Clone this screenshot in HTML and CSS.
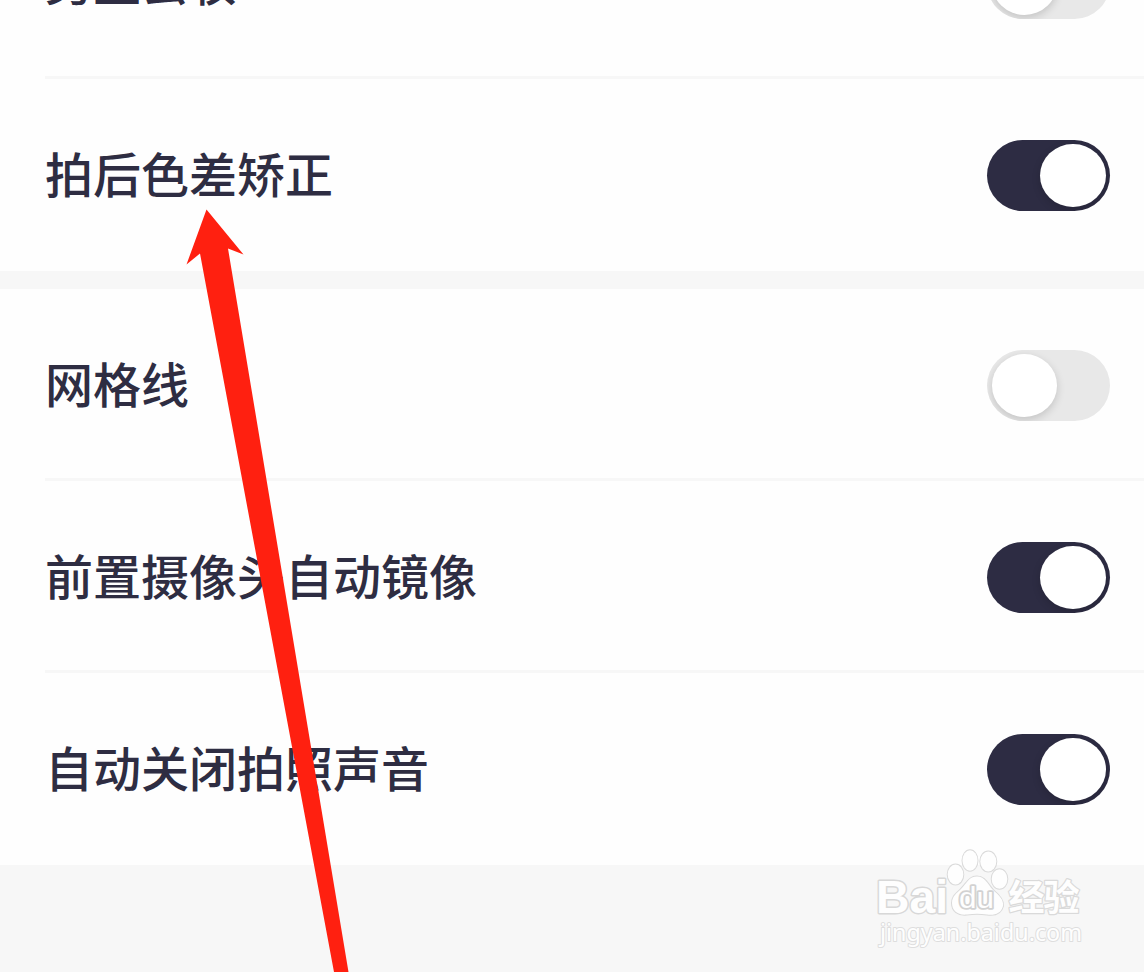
FILE: index.html
```html
<!DOCTYPE html>
<html lang="zh-CN">
<head>
<meta charset="utf-8">
<title>设置</title>
<link rel="stylesheet" href="styles.css">
</head>
<body>
<main class="screen">
  <section class="group group-first">
    <div class="row"><span class="label">男生去妆</span><span class="switch"><i class="knob"></i></span></div>
    <div class="row last"><span class="label">拍后色差矫正</span><span class="switch on"><i class="knob"></i></span></div>
  </section>
  <section class="group">
    <div class="row"><span class="label">网格线</span><span class="switch"><i class="knob"></i></span></div>
    <div class="row"><span class="label">前置摄像头自动镜像</span><span class="switch on"><i class="knob"></i></span></div>
    <div class="row last"><span class="label">自动关闭拍照声音</span><span class="switch on"><i class="knob"></i></span></div>
  </section>
  <svg class="watermark" width="230" height="120" viewBox="866 844 230 120">
    <g class="mark">
      <text class="latin" x="876" y="913" font-size="46" textLength="72" lengthAdjust="spacingAndGlyphs">Bai</text>
      <ellipse cx="955.5" cy="874.5" rx="7.8" ry="10"/>
      <ellipse cx="970" cy="860.5" rx="7.5" ry="10.3"/>
      <ellipse cx="988.3" cy="861.5" rx="8" ry="10"/>
      <ellipse cx="999.5" cy="879" rx="7.8" ry="9.8"/>
      <path d="M977 876.500C985 876.500 987.500 884 993 890C999 895 1004 900 1003 906C1001 914 994 915.500 987 914.500C980 913.500 974 913.500 967 914.500C958 915.500 952 911 952 903C952 896 957 893 961 889C967 883 969 876.500 977 876.500Z"/>
      <text class="du" x="959" y="907.500" font-size="29" textLength="35" lengthAdjust="spacingAndGlyphs">du</text>
      <text class="cjk" x="1008.500" y="911" font-size="36" textLength="71">经验</text>
      <text class="url" x="880" y="940.500" font-size="23" textLength="202" lengthAdjust="spacingAndGlyphs">jingyan.baidu.com</text>
    </g>
  </svg>
  <svg class="arrow" width="1144" height="972" viewBox="0 0 1144 972">
    <path d="M206.500 209.500L243.500 254.500L228 248.500L348.500 972H334L200 253.500L186.500 264.500Z"/>
  </svg>
</main>
</body>
</html>
```
FILE: styles.css
```css
body {
  margin: 0;
}
.screen {
  position: relative;
  width: 1144px;
  height: 972px;
  overflow: hidden;
  background: #f7f7f7;
  font-family: "Noto Sans CJK SC", sans-serif;
}
.group {
  background: #fefefe;
  margin-bottom: 18px;
}
.group-first {
  margin-top: -113px;
}
.row {
  display: flex;
  align-items: center;
  justify-content: space-between;
  box-sizing: border-box;
  height: 192px;
  margin-left: 45px;
  padding: 4px 34px 0 0;
  border-bottom: 3px solid #f7f7f7;
}
.row.last {
  border-bottom-color: transparent;
}
.label {
  padding-bottom: 7px;
  color: #2e2d42;
  font-size: 48px;
  font-weight: 500;
  line-height: 72px;
  white-space: nowrap;
}
.switch {
  display: flex;
  box-sizing: border-box;
  width: 123px;
  height: 71px;
  padding: 4px 4.5px;
  border-radius: 36px;
  background: #e8e8e8;
  overflow: hidden;
}
.switch.on {
  justify-content: flex-end;
  background: #2d2c43;
}
.knob {
  width: 65.5px;
  height: 63px;
  border-radius: 50%;
  background: #fff;
  box-shadow: 0 3px 9px rgba(0, 0, 0, 0.16);
}
.arrow {
  position: absolute;
  inset: 0;
  fill: #ff2010;
}
.watermark {
  position: absolute;
  left: 866px;
  top: 844px;
}
.mark {
  fill: #fefefe;
  stroke: #dadada;
  stroke-width: 2px;
  stroke-linejoin: round;
  paint-order: stroke;
}
.latin,
.du {
  font-family: "Liberation Sans", sans-serif;
  font-weight: 700;
}
.latin {
  stroke: #d8d8d8;
  stroke-width: 3px;
}
.du {
  font-weight: 400;
  stroke: #d2d2d2;
  stroke-width: 3.5px;
}
.cjk {
  font-family: "Noto Sans CJK SC", sans-serif;
  font-weight: 700;
  stroke: #dadada;
  stroke-width: 2.5px;
}
.url {
  font-family: "Noto Sans", sans-serif;
  stroke: #dedede;
}
```
